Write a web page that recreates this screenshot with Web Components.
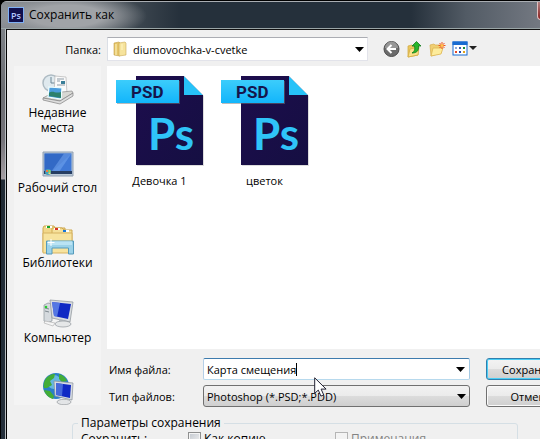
<!DOCTYPE html>
<html lang="ru">
<head>
<meta charset="utf-8">
<title>Сохранить как</title>
<style>
html,body{margin:0;height:100%;overflow:hidden;background:#000}
body{font:11px/15px "Open Sans","Noto Sans",sans-serif;color:#000}
</style>
</head>
<body>
<save-dialog></save-dialog>
<script>
const define=(name,html,setup)=>customElements.define(name,class extends HTMLElement{
  constructor(){
    super();
    const t=document.createElement('template');
    t.innerHTML=html;
    this.attachShadow({mode:'open'}).append(t.content.cloneNode(true));
  }
  connectedCallback(){ if(setup) setup(this,this.shadowRoot); }
});

define('title-bar',`
<style>
:host{display:flex;align-items:center;gap:5px;height:26px;padding:0 0 0 7px;border-top:1px solid #a9adb2;border-bottom:1px solid #9aa5a6;
 background:radial-gradient(ellipse 80px 24px at 66px 14px,#a0a3a7 45%,#a0a3a700 100%),linear-gradient(90deg,#858a90 0,#5b6268 60px,#4a535b 110px,#25303b 180px,#25303b 410px,#525b65 465px,#747982 540px);color:#000;font:12px/16px "Open Sans",sans-serif}
h1{font:inherit;margin:0;flex:1}
svg{width:16px;height:16px;flex:none}
button{align-self:flex-start;width:41px;height:18px;padding:0;border:1px solid #e0c0c0;border-top:0;border-radius:0 0 4px 4px;background:linear-gradient(#b08080,#8a2020)}
</style>
<svg viewBox="0 0 16 16"><rect x=".5" y=".5" width="15" height="15" fill="#100f4d" stroke="#7fb0f5"/><text x="3" y="11.500" font-family="Open Sans,sans-serif" font-size="9" font-weight="600" fill="#b4c8ff">Ps</text></svg>
<h1><slot></slot></h1><button aria-label="Закрыть"></button>`);

define('place-link',`
<style>
:host{display:block;height:75px}
a{display:flex;flex-direction:column;align-items:center;color:#000;text-decoration:none;text-align:center;font:12px/15px "Open Sans",sans-serif}
::slotted(svg){width:32px;height:32px}
</style>
<a href="#"><slot name="icon"></slot><span><slot></slot></span></a>`);

define('psd-file',`
<style>
:host{display:flex;flex-direction:column;align-items:center;width:105px;gap:7px;color:#000}
svg{width:90px;height:91px}
</style>
<svg viewBox="0 0 90 91">
<defs><linearGradient id="b" x1="0" y1="0" x2="0" y2="1"><stop stop-color="#3ccdfb"/><stop offset="1" stop-color="#12b5fb"/></linearGradient>
<linearGradient id="n" x1="0" y1="0" x2="1" y2="1"><stop stop-color="#1d0d4d"/><stop offset="1" stop-color="#150f42"/></linearGradient></defs>
<path d="M22 2h48l19 19v70H22z" fill="#bbb" opacity=".5"/>
<path d="M21 1h48l19 19v70H21z" fill="url(#n)"/><path d="M69 1l19 19H69z" fill="#27c2f8"/><path d="M69 1h19v19z" fill="#fff"/>
<path d="M2 6h63v23H2z" fill="#777" opacity=".5"/><path d="M1 5h63v23H1z" fill="url(#b)"/>
<text x="16" y="23" font-family="Roboto,sans-serif" font-weight="700" font-size="17" fill="#15154c">PSD</text>
<text x="33" y="75" font-family="Lato,sans-serif" font-weight="700" font-size="44" fill="#2fc4f8">Ps</text>
</svg><span><slot></slot></span>`);

define('tool-button',`
<style>
:host{display:flex}
button{display:flex;border:0;padding:0;background:none}
::slotted(svg){height:18px}
</style>
<button><slot></slot></button>`,(h,r)=>r.querySelector('button').setAttribute('aria-label',h.getAttribute('label')));

define('push-button',`
<style>
:host{display:block}
button{box-sizing:border-box;width:100%;height:22px;border:1px solid #707070;border-radius:3px;padding:0;font:inherit;color:#000;background:linear-gradient(#f3f3f3,#ebebeb 50%,#dcdcdc 51%,#cfcfcf);box-shadow:inset 0 0 0 1px #fafafa}
:host([primary]) button{border-color:#2f7fae;box-shadow:inset 0 0 0 1px #49cdf5}
</style>
<button><slot></slot></button>`);

define('check-box',`
<style>
:host{display:block}
label{display:flex;gap:3px}
input{appearance:none;box-sizing:border-box;width:13px;height:13px;margin:1px 0 0;border:1px solid #8e8f8f;background:linear-gradient(135deg,#c3c8cf,#f3f3f3);box-shadow:inset 0 0 0 1px #f4f4f4}
:host([disabled]){color:#838383}
:host([disabled]) input{border-color:#b5b5b5;background:#f3f3f3}
</style>
<label><input type="checkbox"><slot></slot></label>`,(h,r)=>{r.querySelector('input').disabled=h.hasAttribute('disabled')});

define('save-dialog',`
<style>
:host{display:flex;flex-direction:column;width:calc(100% + 38px);min-height:100%;box-sizing:border-box;padding:1px 0 0 1px}
.frame{flex:1;display:flex;flex-direction:column;border-radius:6px 0 0 0;overflow:hidden;background:linear-gradient(#858a90,#6b6d72 90px,#75747a 140px,#a59fa3 178px,#202a34 179px,#25303b)}
.client{flex:1;margin-left:4px;border-left:1px solid #b8bdc0;display:flex}
.inner{flex:1;min-width:0;border-left:1px solid #000;border-top:1px solid #111;background:#f0f0f0;padding:7px 0 0 7px}
.look{display:flex;align-items:center;padding-bottom:5px}
.look>label{width:87px;text-align:right;margin-right:6px}
.combo{position:relative;display:flex;box-sizing:border-box}
.combo>svg.arrow{position:absolute;right:4px;top:50%;margin-top:-2px;width:9px;height:5px;pointer-events:none}
select{appearance:none;box-sizing:border-box;width:100%;height:22px;font:inherit;color:#000;border:1px solid #707070;border-radius:3px;padding:0 3px;background:linear-gradient(#f2f2f2,#ebebeb 50%,#dcdcdc 51%,#cfcfcf)}
.folder{width:261px}
.folder select{height:24px;border-color:#abadb3 #e2e3ea #e2e3ea #dbdfe6;border-radius:0;background:#fff;padding-left:25px}
.folder svg.f{position:absolute;left:6px;top:4px;width:14px;height:16px}
.tools{display:flex;gap:6px;align-items:center;margin-left:15px}
.main{display:flex;gap:6px}
nav{width:87px;height:339px;overflow:hidden;background:#f4f4f4;padding-top:7px;box-sizing:border-box;flex:none}
.right{flex:1;min-width:0;margin-right:2px}
.list{height:274px;padding-top:9px;background:#fff;display:flex}
.fields{display:grid;grid-template-columns:88px minmax(0,1fr) 90px;column-gap:16px;row-gap:5px;padding:9px 0 0 2px;align-items:center}
.fields .combo{margin-left:-10px}
.name{height:22px;align-items:center;border:1px solid #3d7bad;border-color:#3d7bad #a4c9e3 #b7d9ed #b5cfe7;border-radius:2px;background:#fff;padding-left:3px}
input.n{field-sizing:content;border:0;outline:0;padding:0;background:none;font:inherit;color:#000}
.caret{width:1px;height:13px;background:#000}
fieldset{margin:8px 60px 0 58px;border:1px solid #d5dfe5;border-radius:3px;padding:0 0 20px 5px;font:12px/16px "Open Sans",sans-serif;box-sizing:border-box;min-width:0}
legend{padding:0 3px}
.opts{display:grid;grid-template-columns:107px 147px 1fr;padding-left:3px}
.pointer{position:absolute;left:110px;top:18px;width:14px;height:20px;z-index:2;pointer-events:none}
</style>
<div class="frame">
<title-bar>Сохранить как</title-bar>
<div class="client"><div class="inner">
<div class="look"><label for="folder">Папка:</label>
 <div class="combo folder"><select id="folder"><option>diumovochka-v-cvetke</option></select>
 <svg class="f" viewBox="0 0 14 16"><path d="M1 2l5-1 1 1v13l-6-1z" fill="#e5c568" stroke="#c4a04a" stroke-width=".6"/><path d="M6 2l6-1 1 1v12l-7 1z" fill="#f6e39c" stroke="#cba956" stroke-width=".6"/><path d="M3 3v11M9 3v6" stroke="#fff6c4"/></svg>
 <svg class="arrow" viewBox="0 0 9 5"><path d="M0 0h9L4.500 5z"/></svg></div>
 <div class="tools">
 <tool-button label="Назад"><svg width="17" viewBox="0 0 17 18"><circle cx="8.500" cy="9" r="7.500" fill="#6c6c6c" stroke="#4e4e4e"/><path d="M2 8a6.500 6.500 0 0 1 13 0z" fill="#aaa" opacity=".7"/><path d="M13 9H5M8.500 5L4.500 9l4 4" fill="none" stroke="#fff" stroke-width="2"/></svg></tool-button>
 <tool-button label="Вверх"><svg width="17" viewBox="0 0 17 18"><path d="M2 6l4-1 1 1h5v9l-10 2z" fill="#eac75d" stroke="#d3ac46" stroke-width=".8"/><path d="M2 17l2-8 9-2-1 8z" fill="#fbe28a" stroke="#d3ac46" stroke-width=".8"/><path d="M6 13c3-2 3-4 2.500-7H6l4.500-4.500L15 6h-2.500c.5 5-2 7-6.500 7z" fill="#28b62b" stroke="#137a1d" stroke-width=".8"/></svg></tool-button>
 <tool-button label="Новая папка"><svg width="17" viewBox="0 0 17 18"><path d="M1 5l4-1 1 1h6v8L2 16z" fill="#f0cf72" stroke="#dcb455" stroke-width=".8"/><path d="M2 16l2-8h10l-2 6z" fill="#fdec9c" stroke="#ddb552" stroke-width=".8"/><path d="M13 2v7M9.500 5.500h7M10.500 3l5 5M15.500 3l-5 5" stroke="#f0531f"/><circle cx="13" cy="5.500" r="1.500" fill="#ffc34d"/></svg></tool-button>
 <tool-button label="Вид"><svg width="25" viewBox="0 0 25 18"><rect x="1" y="2" width="14" height="13" fill="#fff" stroke="#176bd1"/><path d="M.5 1.500h15V5H.5z" fill="#176bd1"/><path d="M3 7h2v2H3z" fill="#8aaadc"/><path d="M7 7h2v2H7z" fill="#3d5ba9"/><path d="M11 7h2v2h-2z" fill="#178c37"/><path d="M3 11h2v2H3z" fill="#e64a25"/><path d="M7 11h2v2H7z" fill="#2046b4"/><path d="M11 11h2v2h-2z" fill="#e3a319"/><path d="M17 6h8l-4 4z" fill="#222"/></svg></tool-button>
 </div></div>
<div class="main">
<nav>
<place-link><svg slot="icon" viewBox="0 0 32 32"><circle cx="9" cy="10" r="8" fill="#dfe9ee" stroke="#aebbc3" stroke-width="1.500"/><path d="M9 4v6h4" fill="none" stroke="#6c8796"/><path d="M13 3l11 1 1 17H12z" fill="#fafafa" stroke="#b4b4b4" stroke-width=".7"/><path d="M15 6h7M15 8h3M15 12h8" stroke="#8d9ba6"/><path d="M19 8h4v3h-4z" fill="#397e98"/><path d="M1 25l9-5 20-2 1 2-13 8z" fill="#d8d8d4" stroke="#8d8d8d" stroke-width=".7"/><path d="M7 14l13 1-1 11-13-2z" fill="#4b9cdc" stroke="#eff" stroke-width="1.200"/><path d="M7 20c4-3 6 1 12-1v6L7 23z" fill="#2c806c"/><path d="M1 25l17 3 13-8v3l-13 8-17-4z" fill="#dedede" stroke="#808080" stroke-width=".7"/></svg>Недавние<br>места</place-link>
<place-link><svg slot="icon" viewBox="0 0 32 32"><defs><linearGradient id="d" x1="0" y1="0" x2="1" y2="1"><stop stop-color="#27569f"/><stop offset=".5" stop-color="#5a92ea"/><stop offset="1" stop-color="#2459b4"/></linearGradient></defs><path d="M1 4h30v24H1z" fill="#b9c8d7" stroke="#91a0b2"/><path d="M2.500 5.500h27v20h-27z" fill="#3f78d6"/><path d="M2.500 5.500h27L8 25.500H2.500z" fill="#2a5fba" opacity=".6"/><path d="M8 25.500l14-20h7.500L16 25.500z" fill="#78a9f2" opacity=".5"/><path d="M2 23h28v3H2z" fill="#263d62"/><circle cx="6" cy="24" r="3" fill="#42a0bb"/><path d="M4 22h2v2H4z" fill="#f67b41"/><path d="M6.500 22h2v2h-2z" fill="#8edc53"/><path d="M6.500 24.500h2v1.500h-2z" fill="#fce25b"/></svg>Рабочий стол</place-link>
<place-link><svg slot="icon" viewBox="0 0 32 32"><path d="M1 5l1-2h10l1 2h10v24H1z" fill="#f1d789" stroke="#cfa951"/><path d="M10 5h10l2 2h8v22H10z" fill="#f5e09a" stroke="#cfa951"/><path d="M4 4h6M12 6h6M21 8h6" stroke="#fff" stroke-width="2"/><path d="M5 3h3v2H5z" fill="#19a52c"/><path d="M13 5h3v2h-3z" fill="#d93323"/><path d="M21 7h3v2h-3z" fill="#1777d6"/><path d="M1 10h29v20H1z" fill="#f7e39e" stroke="#d6b362"/><path d="M4.500 18h27v13h-5v-6H10v6H4.500z" fill="#9bd2e9" stroke="#559abb"/><path d="M6 19h24M6 21h24" stroke="#d9f4ff"/><path d="M9 16v7M5.500 19.500h7" stroke="#fff"/></svg>Библиотеки</place-link>
<place-link><svg slot="icon" viewBox="0 0 32 32"><path d="M2 7l4-2 4 1v17l-5 2-3-2z" fill="#d5dade" stroke="#8b9298" stroke-width=".7"/><path d="M3 10l4 1M3 13l4 1" stroke="#7f8990"/><circle cx="4" cy="9" r="1.300" fill="#28cb30"/><path d="M8 2l23 2-3 20-18-4z" fill="#d8dce0" stroke="#899097" stroke-width=".7"/><path d="M10 4l19 2-3 15-14-3z" fill="#1029c4"/><path d="M10 4l8 1-3 14-3-1z" fill="#6b91ee" opacity=".75"/><path d="M17 21l5 1v4h-5z" fill="#b9bec2"/><ellipse cx="21" cy="26" rx="8" ry="3" fill="#e5e7e8" stroke="#92989d" stroke-width=".7"/><path d="M3 23l10 2-2 3-9-3z" fill="#f5f5f5" stroke="#aaa" stroke-width=".6"/></svg>Компьютер</place-link>
<place-link><svg slot="icon" viewBox="0 0 32 32"><circle cx="14" cy="13" r="13" fill="#2a7fc9"/><circle cx="12" cy="9" r="7" fill="#8fdcf2" opacity=".6"/><path d="M3 7c3-5 7-6 10-6l-1 4-4 3 2 4-5 3-3 0c-1-3 0-6 1-8zM17 1c4 1 7 4 8 7l-5 1-3-3zM2 17l6 1 4 5-1 3C7 25 3 21 2 17z" fill="#43ad37"/><path d="M12 8l19 2-1 17-17-4z" fill="#d8dde3" stroke="#868f98" stroke-width=".7"/><path d="M14 10l15 2-1 13-14-3z" fill="#1029c4"/><path d="M14 10l7 1-1 12-6-1z" fill="#5e85e6" opacity=".7"/><ellipse cx="22" cy="29" rx="7" ry="2.700" fill="#e3e5e7" stroke="#969b9f" stroke-width=".7"/></svg></place-link>
</nav>
<div class="right">
<div class="list"><psd-file>Девочка 1</psd-file><psd-file>цветок</psd-file></div>
<div class="fields">
<label for="name">Имя файла:</label>
<div class="combo name"><input class="n" id="name" value="Карта смещения"><i class="caret"></i><svg class="arrow" viewBox="0 0 9 5"><path d="M0 0h9L4.500 5z"/></svg>
<svg class="pointer" viewBox="0 0 14 20"><path d="M.7.8v15.500l3.600-3.200 2.600 6 2.800-1.200-2.600-5.800h5z" fill="#fff" stroke="#223"/></svg></div>
<push-button primary>Сохранить</push-button>
<label for="type">Тип файлов:</label>
<div class="combo"><select id="type"><option>Photoshop (*.PSD;*.PDD)</option></select><svg class="arrow" viewBox="0 0 9 5"><path d="M0 0h9L4.500 5z"/></svg></div>
<push-button>Отмена</push-button>
</div></div></div>
<fieldset><legend>Параметры сохранения</legend><div class="opts"><span>Сохранить:</span><check-box>Как копию</check-box><check-box disabled>Примечания</check-box></div></fieldset>
</div></div></div>`);
</script>
</body>
</html>
